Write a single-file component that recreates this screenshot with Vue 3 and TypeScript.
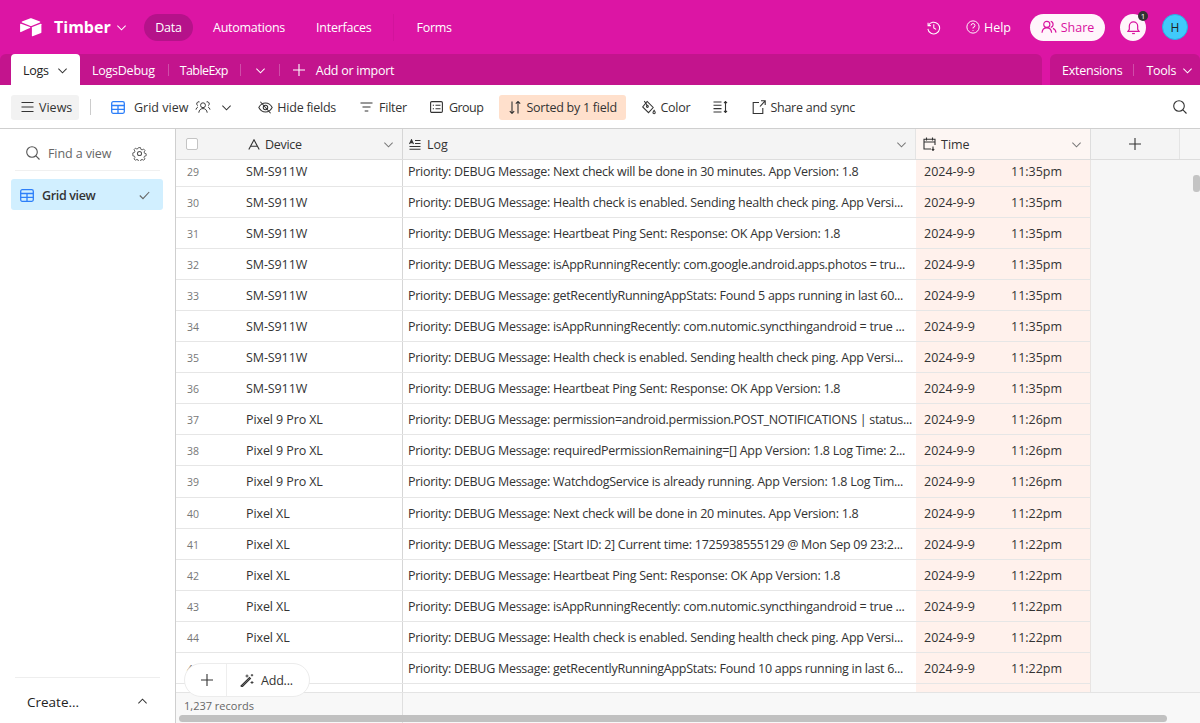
<script setup lang="ts">
interface Row {
  id: number;
  device: string;
  log: string;
  time: string;
}

const S = 'SM-S911W';
const P = 'Pixel 9 Pro XL';
const X = 'Pixel XL';

const rows: Row[] = [
  { id: 29, device: S, log: 'Priority: DEBUG Message: Next check will be done in 30 minutes. App Version: 1.8', time: '11:35pm' },
  { id: 30, device: S, log: 'Priority: DEBUG Message: Health check is enabled. Sending health check ping. App Versi...', time: '11:35pm' },
  { id: 31, device: S, log: 'Priority: DEBUG Message: Heartbeat Ping Sent: Response: OK App Version: 1.8', time: '11:35pm' },
  { id: 32, device: S, log: 'Priority: DEBUG Message: isAppRunningRecently: com.google.android.apps.photos = tru...', time: '11:35pm' },
  { id: 33, device: S, log: 'Priority: DEBUG Message: getRecentlyRunningAppStats: Found 5 apps running in last 60...', time: '11:35pm' },
  { id: 34, device: S, log: 'Priority: DEBUG Message: isAppRunningRecently: com.nutomic.syncthingandroid = true ...', time: '11:35pm' },
  { id: 35, device: S, log: 'Priority: DEBUG Message: Health check is enabled. Sending health check ping. App Versi...', time: '11:35pm' },
  { id: 36, device: S, log: 'Priority: DEBUG Message: Heartbeat Ping Sent: Response: OK App Version: 1.8', time: '11:35pm' },
  { id: 37, device: P, log: 'Priority: DEBUG Message: permission=android.permission.POST_NOTIFICATIONS | status...', time: '11:26pm' },
  { id: 38, device: P, log: 'Priority: DEBUG Message: requiredPermissionRemaining=[] App Version: 1.8 Log Time: 2...', time: '11:26pm' },
  { id: 39, device: P, log: 'Priority: DEBUG Message: WatchdogService is already running. App Version: 1.8 Log Tim...', time: '11:26pm' },
  { id: 40, device: X, log: 'Priority: DEBUG Message: Next check will be done in 20 minutes. App Version: 1.8', time: '11:22pm' },
  { id: 41, device: X, log: 'Priority: DEBUG Message: [Start ID: 2] Current time: 1725938555129 @ Mon Sep 09 23:2...', time: '11:22pm' },
  { id: 42, device: X, log: 'Priority: DEBUG Message: Heartbeat Ping Sent: Response: OK App Version: 1.8', time: '11:22pm' },
  { id: 43, device: X, log: 'Priority: DEBUG Message: isAppRunningRecently: com.nutomic.syncthingandroid = true ...', time: '11:22pm' },
  { id: 44, device: X, log: 'Priority: DEBUG Message: Health check is enabled. Sending health check ping. App Versi...', time: '11:22pm' },
  { id: 45, device: '', log: 'Priority: DEBUG Message: getRecentlyRunningAppStats: Found 10 apps running in last 6...', time: '11:22pm' },
  { id: 46, device: '', log: '', time: '' },
];
</script>

<template>
  <div class="app">
    <header class="topbar">
      <svg class="logo" width="22" height="19" viewBox="0 0 22 19" fill="#fff">
        <path d="M9.8.4 1.9 3.6c-.4.2-.4.8 0 1l8 3.1c.7.3 1.4.3 2.1 0l8-3.1c.4-.2.4-.8 0-1L12 .4c-.7-.3-1.5-.3-2.2 0Z" />
        <path d="M11.9 9.6v8.2c0 .4.4.6.7.5l8.4-3.3c.2-.1.4-.3.4-.5V6.3c0-.4-.4-.6-.7-.5l-8.4 3.3c-.2.1-.4.3-.4.5Z" />
        <path d="M10 9.9 7.500 11.100 1 14.100c-.4.2-.9-.1-.9-.5V6.200c0-.2.1-.3.2-.4l.3-.1c.2-.1.3 0 .5 0L10 9c.4.2.4.700 0 .9Z" />
      </svg>
      <span class="brand">Timber</span>
      <svg class="chev brand-chev" width="11" height="11" viewBox="0 0 12 12"><path d="M1.500 4 6 8.500 10.500 4" /></svg>
      <nav class="nav">
        <a class="nav-pill">Data</a>
        <a class="nav-auto">Automations</a>
        <a class="nav-int">Interfaces</a>
        <i class="nav-sep"></i>
        <a>Forms</a>
      </nav>
      <div class="top-right">
        <svg class="line-white" width="15" height="15" viewBox="0 0 16 16"><path d="M2.200 3v3h3" /><path d="M2.500 6A6.300 6.300 0 1 1 2 9.500" /><path d="M8.300 4.500v4l2.500 1.500" /></svg>
        <svg class="line-white help-icon" width="14" height="14" viewBox="0 0 16 16"><circle cx="8" cy="8" r="7" /><path d="M5.800 6.200A2.200 2.200 0 1 1 8 8.500v1.200" /><path d="M8 11.600v1" /></svg>
        <span class="help">Help</span>
        <button class="share">
          <svg width="16" height="14" viewBox="0 0 18 16" fill="none" stroke="#d9139f" stroke-width="1.300"><circle cx="6.500" cy="5" r="3.500" /><path d="M1 14.500c.3-3.400 2.500-5.500 5.500-5.500s5.200 2.100 5.500 5.500" /><path d="M11 1.600a3.500 3.500 0 0 1 0 6.800M13.500 9.600c2 .7 3.200 2.500 3.500 4.900" /></svg>
          Share
        </button>
        <span class="bell">
          <svg width="13" height="15" viewBox="0 0 14 16" fill="none" stroke="#d9139f" stroke-width="1.300"><path d="M1 12.200h12l-1.500-2.200V6.500a4.500 4.500 0 0 0-9 0V10Z" /><path d="M5.500 14.500h3" /></svg>
          <b class="badge">1</b>
        </span>
        <span class="avatar">H</span>
      </div>
    </header>

    <div class="tabrow">
      <div class="tabs">
        <div class="tab-active">
          Logs
          <svg class="chev dark-chev" width="11" height="11" viewBox="0 0 12 12"><path d="M1.500 4 6 8.500 10.500 4" /></svg>
        </div>
        <span class="tab tab-logsdebug">LogsDebug</span>
        <i class="tab-sep"></i>
        <span class="tab tab-exp">TableExp</span>
        <i class="tab-sep"></i>
        <svg class="chev tab-chev" width="11" height="11" viewBox="0 0 12 12"><path d="M1.500 4 6 8.500 10.500 4" /></svg>
        <i class="tab-sep"></i>
        <svg class="line-white tab-plus" width="12" height="12" viewBox="0 0 12 12"><path d="M6 0v12M0 6h12" /></svg>
        <span class="tab tab-add">Add or import</span>
      </div>
      <div class="tools">
        <span class="tab">Extensions</span>
        <i class="tab-sep tools-sep"></i>
        <span class="tab">Tools</span>
        <svg class="chev tools-chev" width="11" height="11" viewBox="0 0 12 12"><path d="M1.500 4 6 8.500 10.500 4" /></svg>
      </div>
    </div>

    <div class="toolbar">
      <button class="views">
        <svg class="line" width="13" height="12" viewBox="0 0 13 12"><path d="M.5 1.500h12M.5 6h12M.5 10.500h12" /></svg>
        Views
      </button>
      <i class="bar-sep"></i>
      <svg class="grid-icon" width="14" height="13" viewBox="0 0 14 13" fill="none" stroke="#2d7ff9" stroke-width="1.300"><rect x=".7" y=".7" width="12.600" height="11.600" rx="1.500" /><path d="M.7 4.500h12.600M.7 8.400h12.600M7 4.500v7.800" /></svg>
      <span class="view-name">Grid view</span>
      <svg class="line people" width="16" height="14" viewBox="0 0 18 16"><circle cx="9" cy="6" r="2.800" /><path d="M4.200 14.500c.3-3 2.200-4.700 4.800-4.700s4.500 1.700 4.800 4.700" /><path d="M5 2.200A2.200 2.200 0 0 0 3.200 6.400M1 11c.2-1.500 1-2.500 2.200-3M13 2.200a2.200 2.200 0 0 1 1.800 4.200M17 11c-.2-1.500-1-2.500-2.200-3" /></svg>
      <svg class="chev dark-chev view-chev" width="11" height="11" viewBox="0 0 12 12"><path d="M1.500 4 6 8.500 10.500 4" /></svg>

      <span class="tool hide-fields">
        <svg class="line" width="15" height="13" viewBox="0 0 16 14"><path d="M.8 7C2.500 3.800 5 2.200 8 2.200S13.500 3.800 15.200 7C13.500 10.200 11 11.800 8 11.800S2.500 10.200.8 7Z" /><circle cx="8" cy="7" r="2.400" /><path d="M2.500 .8l11 12.400" /></svg>
        Hide fields
      </span>
      <span class="tool filter">
        <svg class="line" width="13" height="10" viewBox="0 0 13 10"><path d="M.5 1h12M2.500 5h8M4.700 9h3.600" /></svg>
        Filter
      </span>
      <span class="tool group">
        <svg class="line" width="13" height="12" viewBox="0 0 13 12"><rect x=".6" y=".6" width="11.800" height="10.800" rx="1.200" /><path d="M2.800 4.200h1.200M5.500 4.200h5M2.800 7.800h1.200M5.500 7.800h5" /></svg>
        Group
      </span>
      <span class="sorted">
        <svg class="line" width="12" height="13" viewBox="0 0 12 13"><path d="M3 .5v12M.8 10.200 3 12.400l2.200-2.200M9 12.500V.5M6.800 2.700 9 .5l2.200 2.200" /></svg>
        Sorted by 1 field
      </span>
      <span class="tool color">
        <svg class="line" width="15" height="15" viewBox="0 0 16 16"><path d="M6.500 1.500 13 8l-5 5.500L1.800 7.300Z" /><circle cx="6.800" cy="7" r="1" /><path d="M3.500 1 6.800 6" /><path d="M14 11c.8 1.100 1.200 1.800 1.200 2.400a1.200 1.200 0 1 1-2.400 0c0-.6.400-1.300 1.200-2.400Z" /></svg>
        Color
      </span>
      <svg class="line row-height" width="15" height="12" viewBox="0 0 15 12"><path d="M.5 1h8M.5 4.300h8M.5 7.600h8M.5 11h8M12.500 .5v11M11 2.200 12.500 .5 14 2.200M11 9.800l1.500 1.700 1.500-1.700" /></svg>
      <span class="tool share-sync">
        <svg class="line" width="14" height="14" viewBox="0 0 14 14"><path d="M7 2.500H1.200v11h9.600V8" /><path d="M8 6.500 13.200.8M9 .8h4.200V5" /></svg>
        Share and sync
      </span>
      <svg class="line search" width="14" height="14" viewBox="0 0 14 14"><circle cx="6" cy="6" r="5.300" /><path d="M9.900 9.900 13.500 13.500" /></svg>
    </div>

    <div class="body">
      <aside class="sidebar">
        <div class="find">
          <svg class="line" width="14" height="14" viewBox="0 0 14 14"><circle cx="6" cy="6" r="5.300" /><path d="M9.900 9.900 13.500 13.500" /></svg>
          <span>Find a view</span>
          <svg class="line gear" width="15" height="15" viewBox="0 0 16 16"><circle cx="8" cy="8" r="2.200" /><path d="M6.800 1h2.400l.4 2 1.500.7 1.800-1 1.600 1.800-1.100 1.700.5 1.500 2 .6v2.400l-2 .5-.5 1.500 1.100 1.700-1.600 1.600-1.800-1-1.500.6-.4 1.900H6.800l-.4-1.900-1.500-.6-1.800 1-1.600-1.600 1.100-1.700-.5-1.500-2-.5V7.300l2-.6.5-1.500-1.100-1.700 1.600-1.800 1.800 1 1.500-.7Z" transform="translate(.8 .8) scale(.9)" /></svg>
        </div>
        <div class="view-item">
          <svg width="14" height="13" viewBox="0 0 14 13" fill="none" stroke="#2d7ff9" stroke-width="1.300"><rect x=".7" y=".7" width="12.600" height="11.600" rx="1.500" /><path d="M.7 4.500h12.600M.7 8.400h12.600M7 4.500v7.800" /></svg>
          <span>Grid view</span>
          <svg class="line item-check" width="11" height="9" viewBox="0 0 11 9"><path d="M.8 4.500 4 7.700 10.200 1" /></svg>
        </div>
        <div class="create">
          <span>Create...</span>
          <svg class="chev dark-chev" width="11" height="11" viewBox="0 0 12 12"><path d="M1.500 8 6 3.500 10.500 8" /></svg>
        </div>
      </aside>

      <main class="grid">
        <div class="head">
          <div class="h-device">
            <i class="checkbox"></i>
            <svg class="line a-icon" width="12" height="11" viewBox="0 0 12 11"><path d="M.8 10.500 6 .8l5.200 9.700M2.700 7.300h6.600" /></svg>
            <span>Device</span>
            <svg class="chev grey-chev" width="11" height="11" viewBox="0 0 12 12"><path d="M1.500 4 6 8.500 10.500 4" /></svg>
          </div>
          <div class="h-log">
            <svg class="line" width="12" height="11" viewBox="0 0 12 11"><path d="M.5 5 2.500.8 4.500 5M1.200 3.600h2.600M6 1.500h5.500M6 4.500h5.500M.5 7.500h11M.5 10.300h11" /></svg>
            <span>Log</span>
            <svg class="chev grey-chev" width="11" height="11" viewBox="0 0 12 12"><path d="M1.500 4 6 8.500 10.500 4" /></svg>
          </div>
          <div class="h-time">
            <svg class="line" width="13" height="14" viewBox="0 0 13 14"><path d="M8 12H1V2.200h11V8M1 5h11M3.500.5v3M9.500.5v3M10 9.500v4M8.800 12l1.200 1.500 1.200-1.500" /></svg>
            <span>Time</span>
            <svg class="chev grey-chev" width="11" height="11" viewBox="0 0 12 12"><path d="M1.500 4 6 8.500 10.500 4" /></svg>
          </div>
          <div class="h-add">
            <svg class="line" width="12" height="12" viewBox="0 0 12 12"><path d="M6 0v12M0 6h12" /></svg>
          </div>
        </div>

        <div class="rows">
          <div class="rows-inner">
            <div v-for="r in rows" :key="r.id" class="row">
              <div class="c-device">
                <span class="num">{{ r.log ? r.id : '' }}</span>
                <span class="dev">{{ r.device }}</span>
              </div>
              <div class="c-log">{{ r.log }}</div>
              <div class="c-time">
                <span class="date">{{ r.time ? '2024-9-9' : '' }}</span>
                <span>{{ r.time }}</span>
              </div>
            </div>
          </div>
        </div>

        <div class="footer">
          <span class="records">1,237 records</span>
          <div class="hscroll"></div>
        </div>

        <div class="vscroll"></div>
        <div class="add-pill">
          <span class="add-plus">
            <svg class="line" width="12" height="12" viewBox="0 0 12 12"><path d="M6 0v12M0 6h12" /></svg>
          </span>
          <span class="add-more">
            <svg class="line" width="14" height="14" viewBox="0 0 14 14"><path d="M1 13 9.500 4.500l1 1L2 14Z" /><path d="M7 1.500v3M5.500 3h3M12 1v2.400M10.800 2.200h2.400M12 8v3M10.500 9.500h3" stroke-width=".9" /></svg>
            Add...
          </span>
        </div>
      </main>
    </div>
  </div>
</template>

<style>
html,
body {
  margin: 0;
  overflow: hidden;
}
</style>

<style scoped>
.app {
  width: 1200px;
  height: 723px;
  display: flex;
  flex-direction: column;
  overflow: hidden;
  background: #fff;
  font-family: "Open Sans", "Noto Sans", sans-serif;
  font-size: 12.5px;
  color: #333;
}
i {
  display: block;
  font-style: normal;
}
button {
  font: inherit;
  border: 0;
  padding: 0;
}
.line,
.line-white,
.chev {
  fill: none;
  stroke-width: 1.100;
  flex: none;
}
.line {
  stroke: #333;
}
.line-white {
  stroke: #fff;
}
.chev {
  stroke: #fff;
}
.dark-chev {
  stroke: #333;
}
.grey-chev {
  stroke: #777;
  margin-left: auto;
}

/* top bar */
.topbar {
  height: 54px;
  flex: none;
  display: flex;
  align-items: center;
  padding-left: 20px;
  background: #dc15a4;
  color: #fff;
}
.logo {
  flex: none;
}
.brand {
  margin-left: 12px;
  font-size: 16px;
  font-weight: 700;
  width: 57px;
}
.brand-chev {
  margin-left: 5px;
}
.nav {
  display: flex;
  align-items: center;
  margin-left: 17px;
  letter-spacing: -0.25px;
}
.nav-pill {
  display: flex;
  align-items: center;
  justify-content: center;
  width: 49px;
  height: 27px;
  border-radius: 14px;
  background: #b5128a;
}
.nav-auto {
  margin-left: 20px;
}
.nav-int {
  margin-left: 31px;
}
.nav-sep {
  width: 1px;
  height: 27px;
  margin: 0 22px;
  background: #d2139c;
}
.top-right {
  margin-left: auto;
  display: flex;
  align-items: center;
  padding-right: 12px;
}
.help-icon {
  margin-left: 25px;
}
.help {
  margin-left: 4px;
}
.share {
  display: flex;
  align-items: center;
  justify-content: center;
  gap: 4px;
  width: 75px;
  height: 27px;
  margin-left: 19px;
  border-radius: 14px;
  background: #fff5fb;
  color: #d9139f;
}
.bell {
  position: relative;
  display: flex;
  align-items: center;
  justify-content: center;
  width: 26px;
  height: 27px;
  margin-left: 15px;
  border-radius: 50%;
  background: #fff5fb;
}
.badge {
  position: absolute;
  top: -3px;
  right: -2px;
  width: 10px;
  height: 10px;
  border-radius: 50%;
  background: #333;
  color: #fff;
  font-size: 8px;
  font-weight: 400;
  line-height: 10px;
  text-align: center;
}
.avatar {
  display: flex;
  align-items: center;
  justify-content: center;
  width: 26px;
  height: 26px;
  margin-left: 16px;
  box-sizing: border-box;
  border: 1px solid #22b3e6;
  border-radius: 50%;
  background: #41c9fb;
  color: #222;
  font-size: 12px;
}

/* tab row */
.tabrow {
  height: 31px;
  flex: none;
  display: flex;
  gap: 8px;
  background: #dc15a4;
  color: #fff;
  letter-spacing: -0.25px;
}
.tabs,
.tools {
  display: flex;
  align-items: center;
  padding-top: 1px;
  box-sizing: border-box;
  background: #c3148d;
  border-radius: 6px 6px 0 0;
}
.tabs {
  width: 1042px;
  padding-left: 11px;
}
.tools {
  flex: 1;
  padding-left: 12px;
}
.tab-active {
  display: flex;
  align-items: center;
  align-self: stretch;
  width: 69px;
  margin-top: -1px;
  padding-top: 1px;
  box-sizing: border-box;
  padding-left: 12px;
  gap: 8px;
  background: #fff;
  border-radius: 4px 4px 0 0;
  color: #222;
}
.tab-logsdebug {
  margin-left: 12px;
}
.tab-sep {
  width: 1px;
  height: 12px;
  background: #d04da9;
}
.tab-logsdebug + .tab-sep {
  margin-left: 13px;
}
.tab-exp {
  margin-left: 11px;
  margin-right: 12px;
  letter-spacing: -0.6px;
}
.tab-chev {
  margin: 0 13px 0 14px;
}
.tab-plus {
  margin-left: 13px;
}
.tab-add {
  margin-left: 11px;
}
.tools-sep {
  margin: 0 12px 0 11px;
}
.tools-chev {
  margin-left: 6px;
}

/* toolbar */
.toolbar {
  height: 44px;
  flex: none;
  display: flex;
  align-items: center;
  padding: 1px 0 0 11px;
  box-sizing: border-box;
  border-bottom: 1px solid #cfcfcf;
  color: #333;
}
.views {
  display: flex;
  align-items: center;
  gap: 5px;
  width: 68px;
  height: 25px;
  padding-left: 10px;
  box-sizing: border-box;
  border-radius: 3px;
  background: #f2f2f2;
  color: #333;
}
.bar-sep {
  width: 1px;
  height: 16px;
  margin-left: 11px;
  background: #ccc;
}
.grid-icon {
  margin-left: 20px;
  flex: none;
}
.view-name {
  margin-left: 9px;
}
.people {
  margin-left: 7px;
}
.view-chev {
  margin-left: 10px;
}
.tool,
.sorted {
  letter-spacing: -0.25px;
}
.tool {
  display: flex;
  align-items: center;
  gap: 4px;
}
.hide-fields {
  margin-left: 26px;
}
.filter {
  margin-left: 24px;
  gap: 6px;
}
.group {
  margin-left: 23px;
  gap: 6px;
  letter-spacing: -0.5px;
}
.sorted {
  display: flex;
  align-items: center;
  gap: 5px;
  width: 127px;
  height: 25px;
  margin-left: 16px;
  padding-left: 10px;
  box-sizing: border-box;
  border-radius: 3px;
  background: #ffe0cc;
}
.color {
  margin-left: 15px;
}
.row-height {
  margin-left: 23px;
}
.share-sync {
  margin-left: 24px;
}
.search {
  margin-left: auto;
  margin-right: 13px;
}

/* sidebar */
.body {
  flex: 1;
  min-height: 0;
  display: flex;
}
.sidebar {
  position: relative;
  width: 176px;
  flex: none;
  box-sizing: border-box;
  display: flex;
  flex-direction: column;
  border-right: 1px solid #cfcfcf;
  padding: 0 12px 0 11px;
}
.find {
  display: flex;
  align-items: center;
  height: 42px;
  margin: 0 3px 8px 4px;
  padding: 7px 13px 0 11px;
  box-sizing: border-box;
  border-bottom: 1px solid #f0f0f0;
  color: #666;
  letter-spacing: -0.1px;
}
.find span {
  margin-left: 8px;
}
.find .line {
  stroke: #555;
}
.gear {
  margin-left: auto;
}
.view-item {
  display: flex;
  align-items: center;
  height: 31px;
  padding: 1px 0 0 9px;
  box-sizing: border-box;
  gap: 8px;
  background: #d1efff;
  border-radius: 3px;
  font-weight: 600;
  letter-spacing: -0.35px;
  color: #333;
}
.item-check {
  margin-left: auto;
  margin-right: 13px;
  stroke: #666;
}
.create {
  display: flex;
  align-items: center;
  justify-content: space-between;
  margin: auto 3px 0 4px;
  height: 46px;
  padding: 2px 12px 0;
  box-sizing: border-box;
  border-top: 1px solid #eee;
  font-size: 13.500px;
  color: #222;
}

/* grid */
.grid {
  position: relative;
  flex: 1;
  min-width: 0;
  display: flex;
  flex-direction: column;
  background: #f6f6f6;
}
.head {
  height: 31px;
  flex: none;
  display: flex;
  box-sizing: border-box;
  border-bottom: 1px solid #ddd;
}
.head > div {
  display: flex;
  align-items: center;
  box-sizing: border-box;
}
.h-device {
  width: 227px;
  padding: 0 8px 0 10px;
  background: #f4f4f4;
  border-right: 1px solid #d6d6d6;
}
.checkbox {
  width: 10px;
  height: 10px;
  border: 1px solid #c4c4c4;
  border-radius: 2px;
  background: #fff;
}
.a-icon {
  margin-left: 50px;
}
.h-device span {
  margin-left: 5px;
  letter-spacing: -0.3px;
}
.h-log {
  width: 513px;
  padding: 0 8px 0 6px;
  background: #f4f4f4;
  border-right: 1px solid #e4e4e4;
}
.h-log span {
  margin-left: 6px;
}
.h-time {
  width: 175px;
  padding: 0 8px 0 7px;
  background: #fdf6f3;
  border-right: 1px solid #ddd;
}
.h-time span {
  margin-left: 5px;
}
.h-add {
  width: 89px;
  justify-content: center;
  background: #f4f4f4;
  border-right: 1px solid #e4e4e4;
}
.rows {
  flex: 1;
  min-height: 0;
  overflow: hidden;
}
.rows-inner {
  margin-top: -4px;
}
.row {
  display: flex;
  height: 31.060px;
  width: 915px;
  box-sizing: border-box;
  border-bottom: 1px solid #e6e6e6;
  background: #fff;
  line-height: 32px;
}
.c-device {
  width: 227px;
  flex: none;
  box-sizing: border-box;
  display: flex;
  padding-left: 11px;
  border-right: 1px solid #d6d6d6;
}
.num {
  width: 59px;
  font-size: 10.500px;
  color: #777;
}
.dev {
  letter-spacing: -0.1px;
}
.c-log {
  width: 513px;
  flex: none;
  box-sizing: border-box;
  padding-left: 5px;
  white-space: nowrap;
  overflow: hidden;
  letter-spacing: -0.275px;
}
.c-time {
  width: 175px;
  flex: none;
  box-sizing: border-box;
  display: flex;
  padding-left: 8px;
  background: #fff1ec;
  border-right: 1px solid #e8e4e2;
}
.date {
  width: 87px;
}
.footer {
  position: relative;
  height: 31px;
  flex: none;
  box-sizing: border-box;
  padding: 5px 0 0 8px;
  background: #f8f8f8;
  border-top: 1px solid #e4e4e4;
  background-image: linear-gradient(#dfdfdf, #dfdfdf);
  background-size: 1px 100%;
  background-position: 226px 0;
  background-repeat: no-repeat;
}
.records {
  display: block;
  font-size: 11px;
  color: #666;
}
.hscroll {
  position: absolute;
  left: 3px;
  bottom: 1px;
  width: 988px;
  height: 7px;
  border-radius: 4px;
  background: #c1c1c1;
}
.vscroll {
  position: absolute;
  top: 46px;
  right: 0;
  width: 7px;
  height: 17px;
  border-radius: 3px;
  background: #c4c4c4;
}
.add-pill {
  position: absolute;
  left: 8px;
  bottom: 26px;
  display: flex;
  align-items: center;
  width: 126px;
  height: 34px;
  box-sizing: border-box;
  border: 1px solid #ececec;
  border-radius: 17px;
  background: #fff;
}
.add-plus {
  display: flex;
  align-items: center;
  justify-content: center;
  width: 42px;
  height: 100%;
  padding-left: 3px;
  box-sizing: border-box;
  border-right: 1px solid #eee;
}
.add-more {
  display: flex;
  align-items: center;
  gap: 7px;
  padding-left: 13px;
  letter-spacing: -0.2px;
}
</style>
